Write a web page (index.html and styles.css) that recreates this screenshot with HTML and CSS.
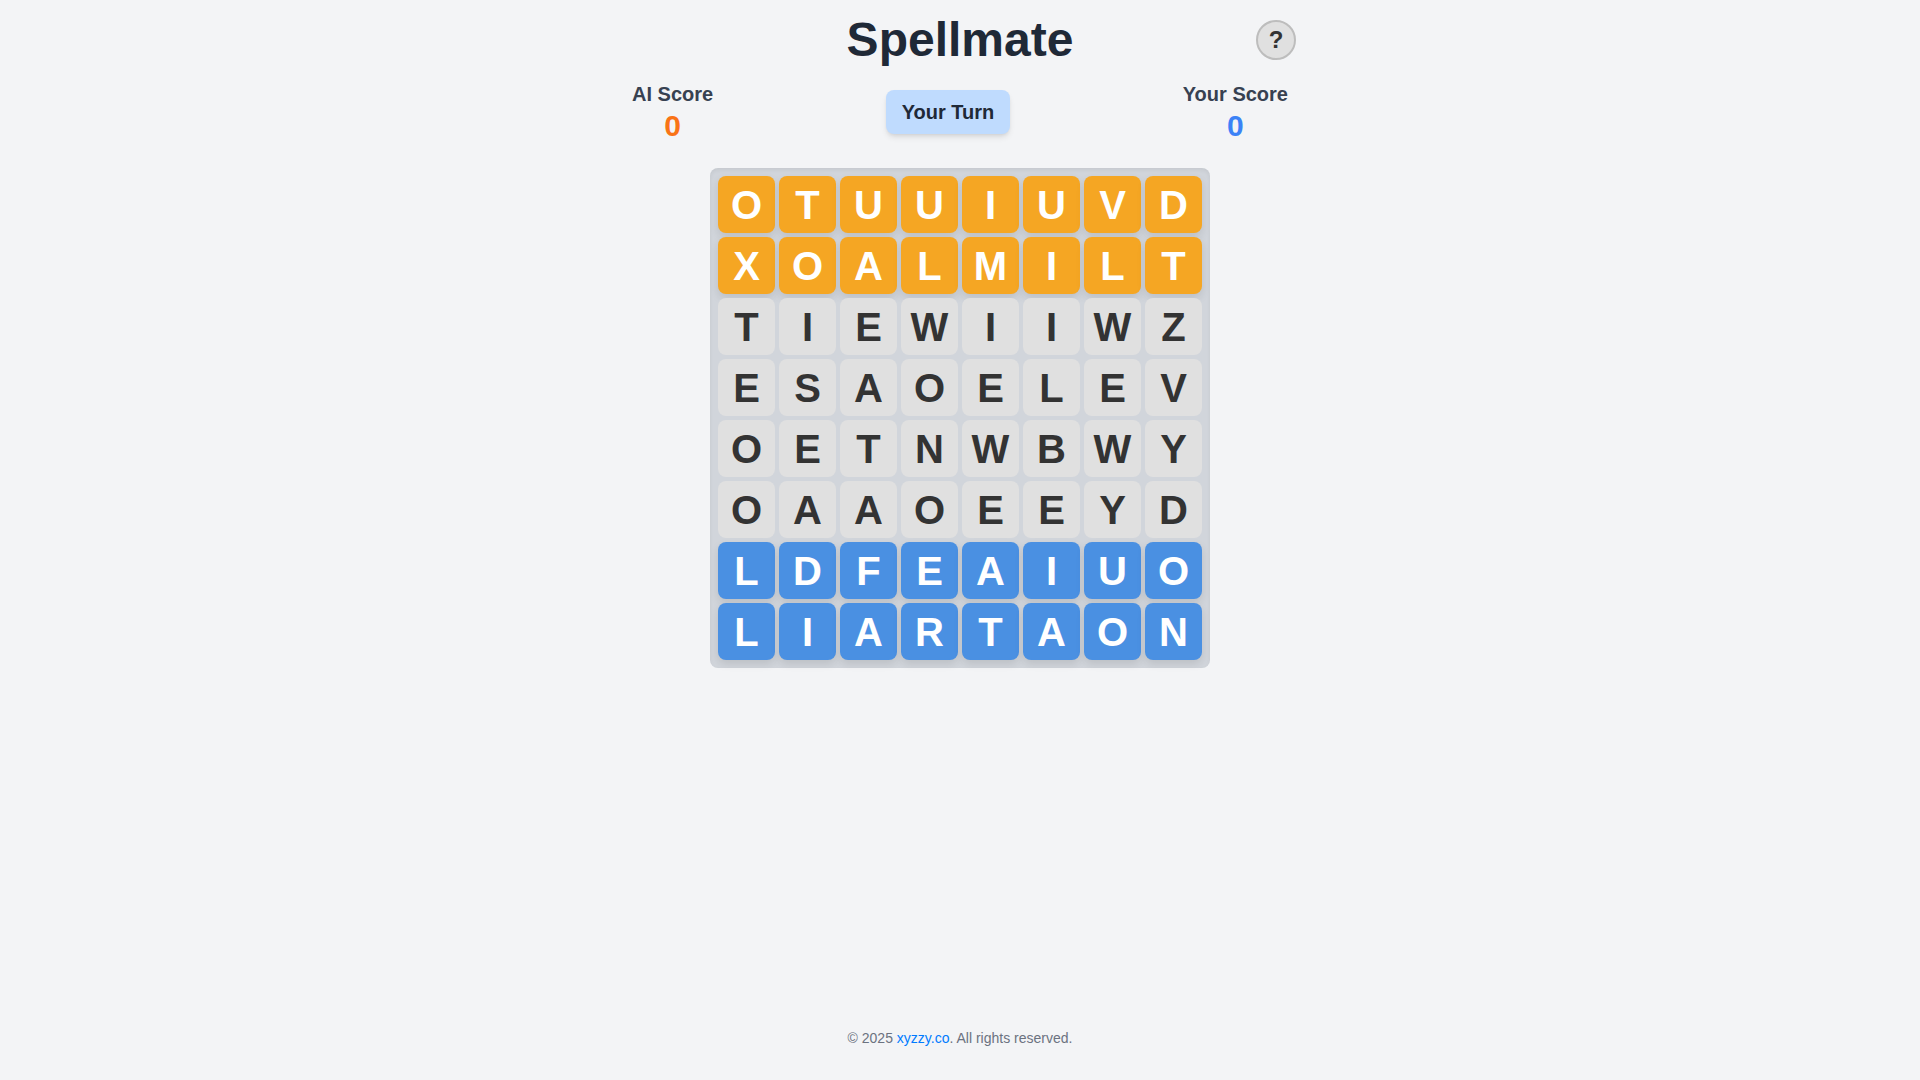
FILE: index.html
```html
<!DOCTYPE html>
<html lang="en">
<head>
  <meta charset="utf-8">
  <meta name="viewport" content="width=device-width, initial-scale=1">
  <title>Spellmate</title>
  <link rel="stylesheet" href="styles.css">
</head>
<body>
  <main class="game">
    <header class="game-header">
      <h1 class="title">Spellmate</h1>
      <button class="help-button" type="button" aria-label="How to play">?</button>
    </header>
    <section class="status">
      <div class="score">
        <h2 class="score-label">AI Score</h2>
        <p class="score-value ai">0</p>
      </div>
      <p class="turn">Your Turn</p>
      <div class="score">
        <h2 class="score-label">Your Score</h2>
        <p class="score-value player">0</p>
      </div>
    </section>
    <div class="board" id="board"></div>
  </main>
  <footer class="footer">© 2025 <a class="footer-link" href="#">xyzzy.co</a>. All rights reserved.</footer>
  <script src="board.js"></script>
</body>
</html>
```
FILE: board.js
```js
const rows = [
  "OTUUIUVD",
  "XOALMILT",
  "TIEWIIWZ",
  "ESAOELEV",
  "OETNWBWY",
  "OAAOEEYD",
  "LDFEAIUO",
  "LIARTAON"
];

const board = document.getElementById("board");

rows.forEach((letters, row) => {
  const owner = row < 2 ? "ai" : row > 5 ? "player" : "neutral";
  for (const letter of letters) {
    const tile = document.createElement("button");
    tile.type = "button";
    tile.className = "tile tile-" + owner;
    tile.textContent = letter;
    board.append(tile);
  }
});
```
FILE: styles.css
```css
* {
  box-sizing: border-box;
  margin: 0;
}

body {
  display: flex;
  flex-direction: column;
  align-items: center;
  min-height: 100vh;
  padding: 16px 16px 32px;
  background: #f3f4f6;
  color: #1f2937;
  font-family: "Liberation Sans", Arial, sans-serif;
}

button {
  padding: 0;
  border: 0;
  font-family: inherit;
  cursor: pointer;
}

.game {
  width: 100%;
  max-width: 672px;
}

.game-header {
  display: grid;
  grid-template-columns: 40px 1fr 40px;
  align-items: center;
  margin-bottom: 16px;
}

.title {
  grid-column: 2;
  font-size: 48px;
  line-height: 48px;
  text-align: center;
}

.help-button {
  width: 40px;
  height: 40px;
  border: 2px solid #bdbdbd;
  border-radius: 50%;
  background: #e0e0e0;
  color: #333333;
  font-size: 24px;
  font-weight: 700;
}

.status {
  display: flex;
  align-items: center;
  justify-content: space-between;
  margin-bottom: 24px;
  padding: 0 8px;
}

.score {
  text-align: center;
}

.score-label {
  color: #374151;
  font-size: 20px;
  line-height: 28px;
}

.score-value {
  font-size: 30px;
  font-weight: 700;
  line-height: 36px;
}

.score-value.ai {
  color: #f97316;
}

.score-value.player {
  color: #3b82f6;
}

.turn {
  padding: 8px 16px;
  border-radius: 8px;
  background: #bfdbfe;
  box-shadow: 0 4px 6px -1px rgba(0, 0, 0, 0.1), 0 2px 4px -2px rgba(0, 0, 0, 0.1);
  font-size: 20px;
  font-weight: 700;
  line-height: 28px;
}

.board {
  display: grid;
  grid-template-columns: repeat(8, 1fr);
  gap: 4px;
  width: 100%;
  max-width: 500px;
  margin: 0 auto;
  padding: 8px;
  border-radius: 8px;
  background: #d1d5db;
  box-shadow: inset 0 2px 4px rgba(0, 0, 0, 0.06);
}

.tile {
  aspect-ratio: 1;
  padding-top: 2px;
  border-radius: 8px;
  font-size: 40px;
  font-weight: 700;
}

.tile-neutral {
  background: #e0e0e0;
  color: #333333;
}

.tile-ai,
.tile-player {
  box-shadow: 0 4px 8px rgba(0, 0, 0, 0.1);
  color: #ffffff;
}

.tile-ai {
  background: #f5a623;
}

.tile-player {
  background: #4a90e2;
}

.footer {
  margin-top: auto;
  color: #6b7280;
  font-size: 14px;
  line-height: 20px;
}

.footer-link {
  color: #007bff;
  text-decoration: none;
}
```
